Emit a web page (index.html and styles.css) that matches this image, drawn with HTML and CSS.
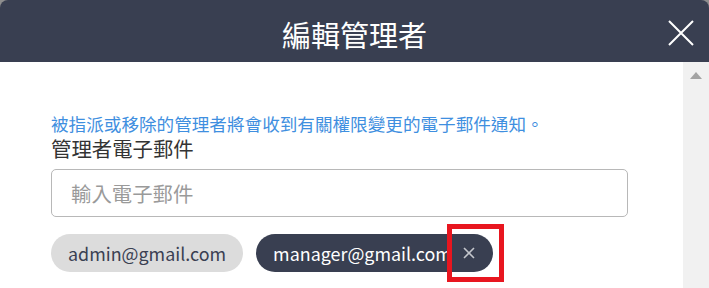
FILE: index.html
```html
<!DOCTYPE html>
<html lang="zh-Hant">
<head>
<meta charset="utf-8">
<link rel="stylesheet" href="styles.css">
</head>
<body>
<div class="modal">
  <header class="modal-header">
    <span></span>
    <h1 class="modal-title">編輯管理者</h1>
    <button class="close-btn" aria-label="close">
      <svg width="26" height="26" viewBox="0 0 26 26"><path d="M1 1 L25 25 M25 1 L1 25" stroke="#fff" stroke-width="2" fill="none"/></svg>
    </button>
  </header>
  <div class="modal-body">
    <div class="content">
      <p class="hint">被指派或移除的管理者將會收到有關權限變更的電子郵件通知。</p>
      <label class="field-label">管理者電子郵件</label>
      <div class="input">輸入電子郵件</div>
      <div class="chips">
        <span class="chip chip-light">admin@gmail.com</span>
        <span class="chip chip-dark">manager@gmail.com<svg class="chip-x" width="12" height="12" viewBox="0 0 12 12"><path d="M1 1 L11 11 M11 1 L1 11" stroke="#c4c6cc" stroke-width="1.6" fill="none"/></svg></span>
      </div>
      <div class="highlight"></div>
    </div>
    <div class="scrollbar">
      <div class="arrow-up"></div>
    </div>
  </div>
</div>
</body>
</html>
```

FILE: styles.css
```css
html, body {
  margin: 0;
  padding: 0;
  background: #8e8e8e;
  font-family: "Noto Sans CJK TC", "Noto Sans", sans-serif;
}
.modal {
  width: 709px;
  height: 288px;
  display: flex;
  flex-direction: column;
  overflow: hidden;
}
.modal-header {
  height: 62px;
  flex: none;
  background: #393f51;
  border-radius: 8px 8px 0 0;
  display: grid;
  grid-template-columns: 1fr auto 1fr;
  align-items: center;
  padding: 0 15px 0 0;
}
.modal-title {
  margin: 0;
  color: #ffffff;
  font-size: 29px;
  font-weight: 400;
  line-height: 62px;
  padding-top: 3px;
  padding-left: 15px;
}
.close-btn {
  justify-self: end;
  background: none;
  border: 0;
  padding: 0;
  width: 26px;
  height: 26px;
  display: flex;
  margin-top: 1px;
}
.modal-body {
  flex: 1;
  display: flex;
  background: #ffffff;
}
.content {
  flex: 1;
  position: relative;
  padding: 52px 0 0 51px;
}
.scrollbar {
  width: 26px;
  flex: none;
  background: #f1f1f1;
  display: flex;
  justify-content: center;
  padding-top: 10px;
  box-sizing: border-box;
}
.arrow-up {
  width: 0;
  height: 0;
  border-left: 6px solid transparent;
  border-right: 6px solid transparent;
  border-bottom: 7px solid #a3a3a3;
}
.hint {
  margin: 0;
  color: #3f8fe0;
  font-size: 17.6px;
  line-height: 20px;
  white-space: nowrap;
}
.field-label {
  display: block;
  margin-top: 2px;
  color: #333333;
  font-size: 20.4px;
  line-height: 24px;
}
.input {
  margin-top: 9px;
  width: 577px;
  height: 48px;
  box-sizing: border-box;
  border: 1px solid #b8b8b8;
  border-radius: 5px;
  padding-left: 19px;
  display: flex;
  align-items: center;
  color: #9a9a9a;
  font-size: 20.4px;
}
.chips {
  margin-top: 17px;
  display: flex;
  gap: 13px;
}
.chip {
  height: 38px;
  border-radius: 19px;
  display: flex;
  align-items: center;
  font-size: 17.9px;
  padding: 0 17px;
  box-sizing: border-box;
}
.chip-light {
  background: #dcdcdc;
  color: #3a4052;
}
.chip-dark {
  background: #393f51;
  color: #ffffff;
  padding-right: 18px;
}
.chip-x {
  margin-left: 11px;
  flex: none;
}
.highlight {
  position: absolute;
  left: 447px;
  top: 162px;
  width: 57px;
  height: 58px;
  box-sizing: border-box;
  border: 5px solid #e8161f;
}
```
